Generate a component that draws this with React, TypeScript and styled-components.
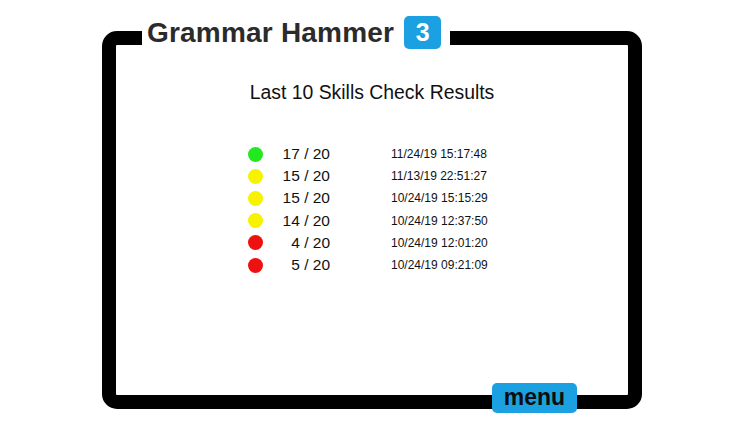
import React from 'react'
import styled, { createGlobalStyle } from 'styled-components'

const GlobalStyle = createGlobalStyle`
  html, body {
    margin: 0;
    padding: 0;
    background: #fff;
  }
  body {
    font-family: "Liberation Sans", Arial, sans-serif;
    color: #111;
  }
`

const Page = styled.div`
  width: 750px;
  height: 422px;
  overflow: hidden;
  padding: 31px 0 0 102px;
  box-sizing: border-box;
`
const Frame = styled.div`
  width: 540px;
  height: 378px;
  box-sizing: border-box;
  border: 14px solid #000;
  border-radius: 15px;
  display: flex;
  flex-direction: column;
`
const TitleBar = styled.div`
  align-self: flex-start;
  display: flex;
  align-items: center;
  margin: -29px 0 0 26px;
  padding: 0 9px 0 5px;
  height: 33px;
  background: #fff;
`
const Title = styled.h1`
  margin: 0;
  font-size: 28px;
  font-weight: bold;
  color: #2b2b2b;
  line-height: 33px;
  letter-spacing: 0.2px;
`
const LevelBadge = styled.div`
  margin-left: 10px;
  width: 37px;
  height: 33px;
  border-radius: 5px;
  background: #1ba1e2;
  color: #fff;
  font-size: 25px;
  font-weight: bold;
  display: flex;
  align-items: center;
  justify-content: center;
`
const Heading = styled.h2`
  margin: 32px 0 0;
  text-align: center;
  font-size: 19.4px;
  font-weight: normal;
  line-height: 22px;
  color: #111;
`
const Results = styled.ul`
  list-style: none;
  margin: 40px 0 0 132px;
  padding: 0;
`
const Row = styled.li`
  display: grid;
  grid-template-columns: 16px 66px 200px;
  align-items: center;
  height: 22.2px;
`
const Dot = styled.span<{ $color: string }>`
  width: 15px;
  height: 15px;
  border-radius: 50%;
  background: ${p => p.$color};
`
const Score = styled.span`
  text-align: right;
  font-size: 15.5px;
  color: #111;
`
const Stamp = styled.span`
  margin-left: 61px;
  font-size: 12px;
  color: #111;
`
const Footer = styled.div`
  margin-top: auto;
  align-self: flex-end;
  margin-right: 51px;
  margin-bottom: -18px;
`
const MenuButton = styled.button`
  width: 85px;
  height: 30px;
  border: none;
  border-radius: 5px;
  background: #1ba1e2;
  color: #0d0d0d;
  font-family: "Liberation Sans", Arial, sans-serif;
  font-size: 23px;
  font-weight: bold;
  padding: 0 0 2px;
  cursor: pointer;
`

const colors = {
  good: '#22e822',
  mid: '#f7f200',
  bad: '#ee1111',
}

const results = [
  { level: 'good', score: '17 / 20', date: '11/24/19 15:17:48' },
  { level: 'mid', score: '15 / 20', date: '11/13/19 22:51:27' },
  { level: 'mid', score: '15 / 20', date: '10/24/19 15:15:29' },
  { level: 'mid', score: '14 / 20', date: '10/24/19 12:37:50' },
  { level: 'bad', score: '4 / 20', date: '10/24/19 12:01:20' },
  { level: 'bad', score: '5 / 20', date: '10/24/19 09:21:09' },
] as const

const App = () => (
  <Page>
    <GlobalStyle />
    <Frame>
      <TitleBar>
        <Title>Grammar Hammer</Title>
        <LevelBadge>3</LevelBadge>
      </TitleBar>
      <Heading>Last 10 Skills Check Results</Heading>
      <Results>
        {results.map(r => (
          <Row key={r.date}>
            <Dot $color={colors[r.level]} />
            <Score>{r.score}</Score>
            <Stamp>{r.date}</Stamp>
          </Row>
        ))}
      </Results>
      <Footer>
        <MenuButton>menu</MenuButton>
      </Footer>
    </Frame>
  </Page>
)

export default App
